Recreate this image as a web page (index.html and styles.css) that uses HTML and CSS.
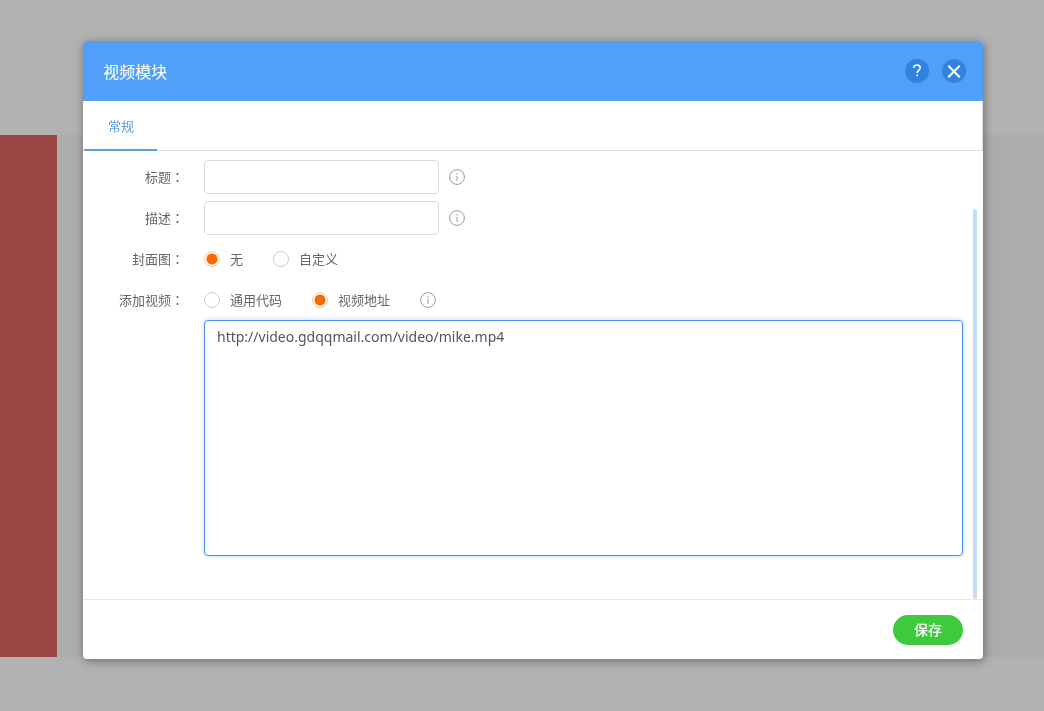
FILE: index.html
```html
<!DOCTYPE html>
<html lang="zh-CN">
<head>
<meta charset="utf-8">
<title>视频模块</title>
<link rel="stylesheet" href="styles.css">
</head>
<body>
<div class="page">
  <div class="band"><div class="banner"></div></div>
</div>
<div class="overlay">
  <section class="dialog" role="dialog" aria-labelledby="dialog-title">
    <header class="dialog-header">
      <h1 class="dialog-title" id="dialog-title">视频模块</h1>
      <button class="round-button" type="button" aria-label="帮助">
        <svg width="24" height="24" viewBox="0 0 24 24" fill="none" stroke="currentColor" stroke-width="1.6"><path d="M8.7 8.8C8.8 6.8 10.1 6 12 6c2 0 3.2 1.1 3.2 2.7 0 2.5-3.1 2.7-3.1 5.4"/><path d="M12.1 15.4v1.8"/></svg>
      </button>
      <button class="round-button" type="button" aria-label="关闭">
        <svg width="24" height="24" viewBox="0 0 24 24" fill="none" stroke="currentColor" stroke-width="2"><path d="M6.3 6.8l11.4 11.4M17.7 6.8L6.3 18.2"/></svg>
      </button>
    </header>
    <nav class="tabs"><button class="tab" type="button">常规</button></nav>
    <form class="form" id="video-form">
      <div class="row">
        <label class="label" for="title">标题<span class="colon" lang="zh-TW">：</span></label>
        <div class="controls">
          <input class="text-input" id="title" type="text">
          <svg class="info" viewBox="0 0 16 16"><circle cx="8" cy="8" r="7.4"/><path d="M8 7v5M8 4.2v1.4"/></svg>
        </div>
      </div>
      <div class="row">
        <label class="label" for="desc">描述<span class="colon" lang="zh-TW">：</span></label>
        <div class="controls">
          <input class="text-input" id="desc" type="text">
          <svg class="info" viewBox="0 0 16 16"><circle cx="8" cy="8" r="7.4"/><path d="M8 7v5M8 4.2v1.4"/></svg>
        </div>
      </div>
      <div class="row" role="radiogroup" aria-labelledby="cover-label">
        <span class="label" id="cover-label">封面图<span class="colon" lang="zh-TW">：</span></span>
        <div class="controls options">
          <label class="option"><input class="radio" type="radio" name="cover" checked>无</label>
          <label class="option"><input class="radio" type="radio" name="cover">自定义</label>
        </div>
      </div>
      <div class="row" role="radiogroup" aria-labelledby="source-label">
        <span class="label" id="source-label">添加视频<span class="colon" lang="zh-TW">：</span></span>
        <div class="controls options">
          <label class="option"><input class="radio" type="radio" name="source">通用代码</label>
          <label class="option"><input class="radio" type="radio" name="source" checked>视频地址</label>
          <svg class="info" viewBox="0 0 16 16"><circle cx="8" cy="8" r="7.4"/><path d="M8 7v5M8 4.2v1.4"/></svg>
        </div>
      </div>
      <textarea class="address" aria-label="视频地址" spellcheck="false">http://video.gdqqmail.com/video/mike.mp4</textarea>
      <div class="scroll-thumb"></div>
    </form>
    <footer class="dialog-footer"><button class="save" type="submit" form="video-form">保存</button></footer>
  </section>
</div>
</body>
</html>
```
FILE: styles.css
```css
* {
  box-sizing: border-box;
}

body {
  margin: 0;
  background: #b2b2b2;
  color: #666;
  font: 13px/20px "Noto Sans CJK SC", sans-serif;
}

button,
input,
textarea {
  font: inherit;
}

.page {
  display: flex;
  height: 100vh;
  padding: 135px 0 54px;
}

.band {
  display: flex;
  flex: 1;
  background: #acacac;
}

.banner {
  width: 58px;
  background: #9b4444;
  border-right: 1px solid #b8b0b0;
}

.overlay {
  position: fixed;
  inset: 0;
  display: flex;
  padding: 41px 61px 52px 83px;
}

.dialog {
  display: flex;
  flex: 1;
  flex-direction: column;
  min-width: 0;
  background: #fff;
  border-radius: 4px;
  box-shadow: 1px 2px 10px rgba(0, 0, 0, 0.4);
}

.dialog-header {
  display: flex;
  align-items: center;
  gap: 13px;
  height: 60px;
  padding: 0 17px 0 20px;
  background: #50a0f9;
  border-radius: 4px 4px 0 0;
}

.dialog-title {
  flex: 1;
  margin: 0;
  color: #fff;
  font-size: 16px;
  font-weight: 400;
  line-height: 24px;
}

.round-button {
  width: 24px;
  height: 24px;
  padding: 0;
  border: 0;
  border-radius: 50%;
  background: #3183e0;
  color: #fff;
}

.round-button svg {
  display: block;
}

.tabs {
  display: flex;
  height: 50px;
  padding-left: 1px;
  border-right: 1px solid #dcdfe4;
  border-bottom: 1px solid #dcdfe4;
}

.tab {
  height: 50px;
  padding: 2px 23px 0 24px;
  border: 0;
  border-bottom: 2px solid #5a9fdc;
  background: none;
  color: #569de6;
}

.form {
  position: relative;
  display: flex;
  flex: 1;
  flex-direction: column;
  gap: 7px;
  padding: 9px 20px 0 0;
}

.row {
  display: flex;
  align-items: center;
  gap: 20px;
  height: 34px;
}

.label {
  width: 101px;
  text-align: right;
}

.colon {
  font-family: "Noto Sans CJK TC", sans-serif;
}

.controls {
  display: flex;
  align-items: center;
  gap: 10px;
}

.options {
  gap: 30px;
}

.option {
  display: flex;
  align-items: center;
  gap: 10px;
}

.text-input {
  width: 235px;
  height: 34px;
  padding: 0 12px;
  border: 1px solid #d9d9df;
  border-radius: 4px;
}

.radio {
  width: 16px;
  height: 16px;
  margin: 0;
  appearance: none;
  border: 1px solid #ccc;
  border-radius: 50%;
  background: #fff;
}

.radio:checked {
  border-color: #f5c9a8;
  background: radial-gradient(circle, #f96a00 5px, #fff 6px);
}

.info {
  width: 16px;
  height: 16px;
  fill: none;
  stroke: #999;
}

.address {
  height: 236px;
  margin: -4px 0 0 121px;
  padding: 6px 12px;
  border: 1px solid #4a8df0;
  border-radius: 4px;
  outline: 0;
  box-shadow: 0 0 5px #b5dcf8;
  color: #555;
  font: 14px/20px "Noto Sans", sans-serif;
  resize: none;
}

.scroll-thumb {
  position: absolute;
  top: 13%;
  right: 6px;
  bottom: 0;
  width: 4px;
  border-radius: 2px;
  background: #c5dcf8;
}

.dialog-footer {
  display: flex;
  justify-content: flex-end;
  align-items: center;
  height: 60px;
  padding: 0 20px;
  border-top: 1px solid #e8e9ec;
}

.save {
  width: 70px;
  height: 30px;
  padding: 0 0 2px;
  border: 0;
  border-radius: 15px;
  background: #3fc93f;
  color: #fff;
  font-size: 14px;
  font-weight: 500;
}
```
